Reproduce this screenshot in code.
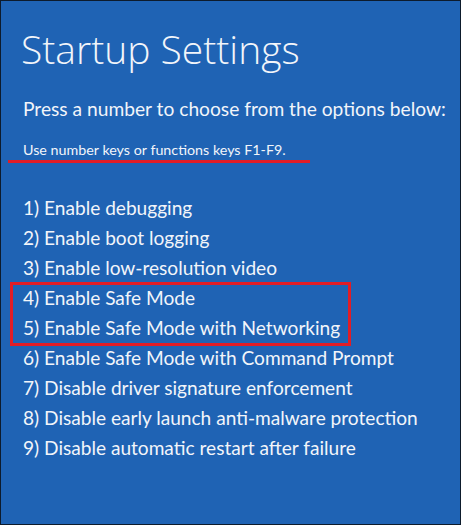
const options = [
  '1) Enable debugging',
  '2) Enable boot logging',
  '3) Enable low-resolution video',
  '4) Enable Safe Mode',
  '5) Enable Safe Mode with Networking',
  '6) Enable Safe Mode with Command Prompt',
  '7) Disable driver signature enforcement',
  '8) Disable early launch anti-malware protection',
  '9) Disable automatic restart after failure',
];

function Option({ text }: { text: string }) {
  return <div className="h-[30px] whitespace-nowrap text-[19.1px] leading-[30px]">{text}</div>;
}

export default function App() {
  return (
    <div className="w-[461px] h-[525px] overflow-hidden border border-[#0d1b2c] bg-[#1f63b4] text-[#f2f5fa] font-['Lato',sans-serif]">
      <div className="pl-[20px] pt-[24px]">
        <h1 className="whitespace-nowrap font-['Open_Sans',sans-serif] text-[39px] font-light leading-[48px]">
          Startup Settings
        </h1>
        <p className="mt-[22px] pl-[2px] whitespace-nowrap text-[19.2px] leading-[28px]">
          Press a number to choose from the options below:
        </p>
        <p className="mt-[17px] pl-[2px] whitespace-nowrap text-[14.3px] leading-[20px]">
          Use number keys or functions keys F1-F9.
        </p>
        {/* red underline under the hint */}
        <div className="-ml-[13px] h-[3px] w-[302px] bg-[#e11d26]" />

        <div className="mt-[30px] pl-[2px]">
          {options.slice(0, 3).map((o) => (
            <Option key={o} text={o} />
          ))}
          <div className="relative">
            {options.slice(3, 5).map((o) => (
              <Option key={o} text={o} />
            ))}
            {/* red highlight box */}
            <div className="absolute -left-[13px] -top-[1px] h-[64px] w-[341px] border-[3px] border-[#e11d26]" />
          </div>
          {options.slice(5).map((o) => (
            <Option key={o} text={o} />
          ))}
        </div>
      </div>
    </div>
  );
}
